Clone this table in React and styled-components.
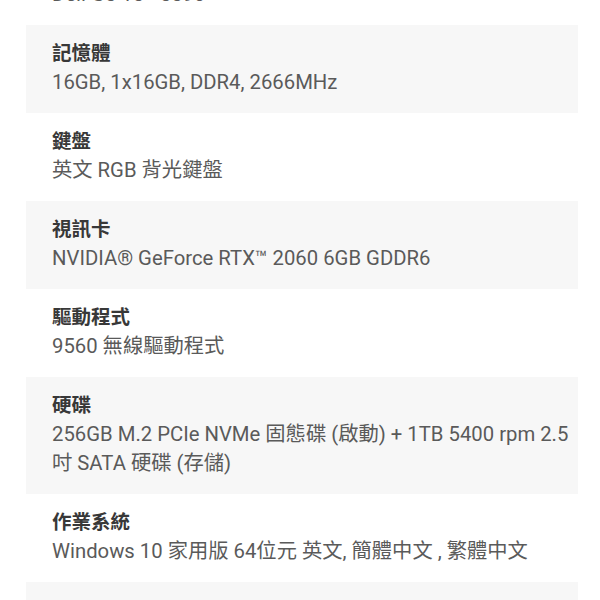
import styled, { createGlobalStyle } from 'styled-components';

const GlobalStyle = createGlobalStyle`
  body {
    margin: 0;
    background: #ffffff;
    font-family: Roboto, 'Noto Sans CJK TC', sans-serif;
  }
`;

const Page = styled.div`
  width: 600px;
  height: 600px;
  overflow: hidden;
  background: #ffffff;
`;

const SpecList = styled.div`
  display: flex;
  flex-direction: column;
  margin: -63px 22px 0 26px;
`;

const SpecRow = styled.div`
  padding: 15px 6px 16px 26px;
  background: ${({ shaded }) => (shaded ? '#f7f7f7' : '#ffffff')};
`;

const SpecTitle = styled.div`
  font-size: 19.5px;
  line-height: 28px;
  font-weight: 700;
  color: #383838;
`;

const SpecValue = styled.div`
  font-size: 20.3px;
  line-height: 29px;
  color: #5a5a5a;
`;

const specs = [
  { title: '型號', value: 'Dell G5 15 - 5590' },
  { title: '記憶體', value: '16GB, 1x16GB, DDR4, 2666MHz' },
  { title: '鍵盤', value: '英文 RGB 背光鍵盤' },
  { title: '視訊卡', value: 'NVIDIA® GeForce RTX™ 2060 6GB GDDR6' },
  { title: '驅動程式', value: '9560 無線驅動程式' },
  {
    title: '硬碟',
    value: '256GB M.2 PCIe NVMe 固態碟 (啟動) + 1TB 5400 rpm 2.5 吋 SATA 硬碟 (存儲)',
  },
  { title: '作業系統', value: 'Windows 10 家用版 64位元 英文, 簡體中文 , 繁體中文' },
  { title: '保養', value: '1 年上門服務' },
];

const App = () => (
  <Page>
    <GlobalStyle />
    <SpecList>
      {specs.map((spec, i) => (
        <SpecRow key={spec.title} shaded={i % 2 === 1}>
          <SpecTitle>{spec.title}</SpecTitle>
          <SpecValue>{spec.value}</SpecValue>
        </SpecRow>
      ))}
    </SpecList>
  </Page>
);

export default App;
